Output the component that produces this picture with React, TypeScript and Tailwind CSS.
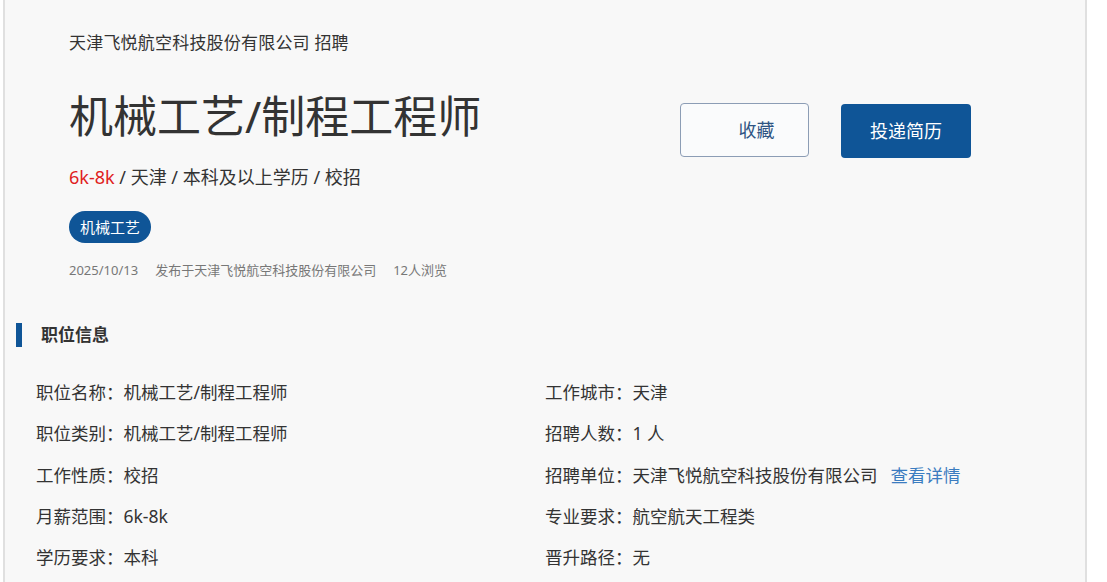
import React from 'react';

const font = { fontFamily: '"Noto Sans", "Noto Sans CJK SC", sans-serif' };

const leftRows: [string, string][] = [
  ['职位名称', '机械工艺/制程工程师'],
  ['职位类别', '机械工艺/制程工程师'],
  ['工作性质', '校招'],
  ['月薪范围', '6k-8k'],
  ['学历要求', '本科'],
];

const rightRows: [string, string][] = [
  ['工作城市', '天津'],
  ['招聘人数', '1 人'],
  ['招聘单位', '天津飞悦航空科技股份有限公司'],
  ['专业要求', '航空航天工程类'],
  ['晋升路径', '无'],
];

const InfoRow = ({ label, value, link }: { label: string; value: string; link?: boolean }) => (
  <div className="flex items-center h-[41.25px] text-[17.5px] text-[#333]">
    <span>{label}：</span>
    <span>{value}</span>
    {link && <a className="ml-[13px] text-[#3b7cc0] cursor-pointer">查看详情</a>}
  </div>
);

const App = () => {
  return (
    <div className="w-[1107px] h-[582px] bg-white overflow-hidden" style={font}>
      <div className="ml-[3px] w-[1084px] h-full bg-[#f8f8f8] border-x-2 border-[#e0e0e0]">
        {/* Header */}
        <div className="flex justify-between pl-[64px] pr-[114px]">
          <div>
            <div className="mt-[31px] text-[17px] leading-6 text-[#333] tracking-[0.2px]">天津飞悦航空科技股份有限公司 招聘</div>
            <h1 className="mt-[35px] text-[44px] leading-[52px] text-[#333] font-normal">机械工艺/制程工程师</h1>
            <div className="mt-[23px] text-[18px] leading-6 text-[#333]">
              <span className="text-[#e02020]">6k-8k</span> / 天津 / 本科及以上学历 / 校招
            </div>
            <div className="mt-[22px] inline-flex items-center h-[32px] px-[11px] rounded-full bg-[#0f5597] text-white text-[15px]">
              机械工艺
            </div>
            <div className="mt-[17px] flex gap-[17px] text-[13px] leading-5 text-[#777]">
              <span>2025/10/13</span>
              <span>发布于天津飞悦航空科技股份有限公司</span>
              <span>12人浏览</span>
            </div>
          </div>
          <div className="flex gap-[32px] mt-[103px] h-[54px]">
            <button className="w-[129px] h-[54px] rounded-[4px] border border-[#8c9db5] bg-[#fafbfc] text-[18px] text-[#2f5583] pl-[24px]">
              收藏
            </button>
            <button className="w-[130px] h-[54px] mt-[1px] rounded-[4px] bg-[#0f5597] text-[18px] text-white">
              投递简历
            </button>
          </div>
        </div>

        {/* Section title */}
        <div className="mt-[42px] flex items-center pl-[11px]">
          <div className="w-[6px] h-[24px] bg-[#0f5597]" />
          <h2 className="ml-[19px] text-[17px] font-bold text-[#333]">职位信息</h2>
        </div>

        {/* Info grid */}
        <div className="mt-[24px] grid grid-cols-2 pl-[31px] pr-[31px]">
          <div>
            {leftRows.map(([l, v]) => (
              <InfoRow key={l} label={l} value={v} />
            ))}
          </div>
          <div>
            {rightRows.map(([l, v]) => (
              <InfoRow key={l} label={l} value={v} link={l === '招聘单位'} />
            ))}
          </div>
        </div>
      </div>
    </div>
  );
};

export default App;
